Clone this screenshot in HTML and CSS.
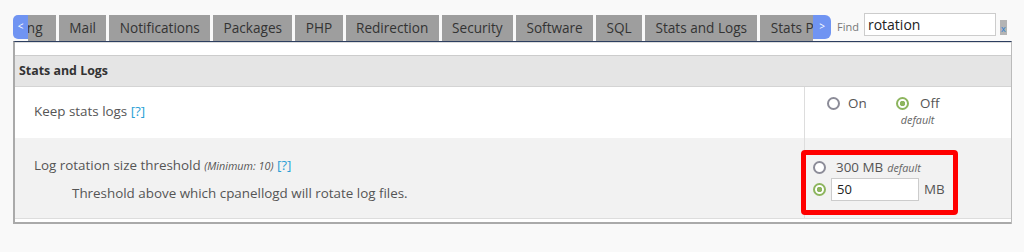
FILE: index.html
```html
<!DOCTYPE html>
<html lang="en">
<head>
    <meta charset="UTF-8">
    <title>Tweak Settings</title>
    <link rel="stylesheet" href="styles.css">
</head>
<body>
    <div class="tabbar">
        <span class="arrow arrow-left">&lt;</span>
        <div class="tabs-view">
            <div class="tabs">
                <span class="tab">Logging</span>
                <span class="tab">Mail</span>
                <span class="tab">Notifications</span>
                <span class="tab">Packages</span>
                <span class="tab">PHP</span>
                <span class="tab">Redirection</span>
                <span class="tab">Security</span>
                <span class="tab">Software</span>
                <span class="tab">SQL</span>
                <span class="tab">Stats and Logs</span>
                <span class="tab">Stats Programs</span>
            </div>
        </div>
        <span class="arrow arrow-right">&gt;</span>
        <div class="find">
            <label for="findBox">Find</label>
            <input type="text" id="findBox" value="rotation">
            <span class="clear">x</span>
        </div>
    </div>

    <div class="panel">
        <div class="panel-top"></div>
        <div class="section-head">Stats and Logs</div>

        <div class="row row-white">
            <div class="cell-name">
                <p>Keep stats logs <a href="#">[?]</a></p>
            </div>
            <div class="cell-value">
                <div class="radios">
                    <label class="opt"><span class="radio"></span> On</label>
                    <label class="opt opt-col">
                        <span><span class="radio checked"></span> Off</span>
                        <em class="default">default</em>
                    </label>
                </div>
            </div>
        </div>

        <div class="row row-gray">
            <div class="cell-name">
                <p>Log rotation size threshold <em class="minimum">(Minimum: 10)</em> <a href="#">[?]</a></p>
                <p class="desc">Threshold above which cpanellogd will rotate log files.</p>
            </div>
            <div class="cell-value">
                <div class="choice"><span class="radio"></span> 300 MB <em class="default">default</em></div>
                <div class="choice"><span class="radio checked near"></span><input type="text" class="size" value="50"> MB</div>
            </div>
            <div class="highlight"></div>
        </div>
        <div class="panel-bottom"></div>
    </div>
</body>
</html>
```

FILE: styles.css
```css
body {
    margin: 0;
    background: #f9f9f9;
    font-family: "Open Sans", Arial, sans-serif;
    color: #444;
}
.tabbar {
    display: flex;
    align-items: flex-start;
    margin: 13px 0 0 13px;
    height: 28px;
}
.arrow {
    margin-top: 2px;
    height: 24px;
    width: 15px;
    background: #7094f2;
    color: #fff;
    font-size: 10px;
    line-height: 22px;
    text-align: center;
}
.arrow-left {
    border-radius: 5px 0 0 5px;
}
.arrow-right {
    width: 18px;
    border-radius: 0 6px 6px 0;
}
.tabs-view {
    width: 785px;
    overflow: hidden;
    margin-top: 2px;
}
.tabs {
    display: flex;
    margin-left: -45px;
}
.tab {
    flex: none;
    background: #9e9e9e;
    color: #333;
    font-size: 13.6px;
    height: 26px;
    line-height: 26px;
    padding: 0 10.4px;
    margin-right: 3px;
    white-space: nowrap;
}
.tab:first-child {
    padding-right: 13.4px;
}
.find {
    display: flex;
    align-items: flex-start;
    margin-left: 6px;
}
.find label {
    font-size: 11px;
    color: #777;
    margin-top: 6px;
    margin-right: 5px;
}
.find input {
    width: 124px;
    height: 21px;
    border: 1px solid #ccc;
    padding: 0 3px;
    font-family: "Open Sans", Arial, sans-serif;
    font-size: 14px;
    color: #222;
}
.clear {
    margin: 7px 0 0 4px;
    width: 7px;
    height: 15px;
    background: #b4b4b4;
    color: #2a7fd4;
    font-size: 9px;
    line-height: 17px;
    text-align: center;
}
.panel {
    margin-left: 13px;
    width: 999px;
    border-left: 2px solid #aaa;
    border-right: 1px solid #bbb;
    border-top: 1px solid #2c3e60;
    box-sizing: border-box;
}
.panel-top {
    height: 12px;
    background: #fff;
    border-top: 1px solid #ddd;
    border-bottom: 1px solid #ccc;
}
.section-head {
    background: #e5e5e5;
    font-size: 12.4px;
    font-weight: bold;
    color: #333;
    height: 30px;
    line-height: 30px;
    padding-left: 4px;
    border-bottom: 1px solid #d4d4d4;
}
.row {
    display: flex;
    position: relative;
}
.row-white {
    background: #fff;
    height: 51px;
}
.row-gray {
    background: #f2f2f2;
    height: 80px;
}
.cell-name {
    flex: 1;
    padding-left: 19px;
    font-size: 13.4px;
    color: #555;
}
.cell-name p {
    margin: 0;
}
.row-white .cell-name {
    padding-top: 15px;
}
.row-gray .cell-name {
    padding-top: 18px;
}
.cell-name a {
    color: #2a9fd6;
    text-decoration: none;
}
.desc {
    padding-left: 38px;
    margin-top: 10px !important;
}
.minimum {
    font-size: 10.8px;
}
.cell-value {
    box-sizing: border-box;
    width: 207px;
    border-left: 1px solid #ddd;
    font-size: 13.4px;
    color: #555;
}
.radios {
    display: flex;
    gap: 29px;
    padding: 7px 0 0 22px;
}
.opt {
    display: flex;
    align-items: center;
    height: 18px;
}
.opt-col {
    flex-direction: column;
    align-items: center;
    height: auto;
}
.default {
    font-size: 10.8px;
    color: #666;
}
.radio {
    display: inline-block;
    box-sizing: border-box;
    width: 13px;
    height: 13px;
    border: 2px solid #8c8c98;
    border-radius: 50%;
    background: #fff;
    margin-right: 8px;
    vertical-align: -2px;
}
.radio.checked {
    border-color: #8db55e;
    background: radial-gradient(circle, #8db55e 0 2.5px, #fff 3px);
}
.row-gray .cell-value {
    padding: 18px 0 0 8px;
}
.choice {
    height: 22px;
    display: flex;
    align-items: center;
}
.choice .radio {
    margin-right: 10px;
}
.choice .radio.near {
    margin-right: 5px;
}
.choice .default {
    margin-left: 4px;
}
.size {
    box-sizing: border-box;
    width: 88px;
    height: 23px;
    border: 1px solid #ccc;
    padding: 0 5px;
    margin-right: 5px;
    font-family: "Open Sans", Arial, sans-serif;
    font-size: 13px;
    color: #222;
}
.highlight {
    position: absolute;
    left: 786px;
    top: 12px;
    width: 147px;
    height: 55px;
    border: 5px solid #ff0000;
    border-radius: 4px;
}
.panel-bottom {
    height: 3px;
    background: #fff;
    border-top: 1px solid #ddd;
    border-bottom: 2px solid #aaa;
}
```
